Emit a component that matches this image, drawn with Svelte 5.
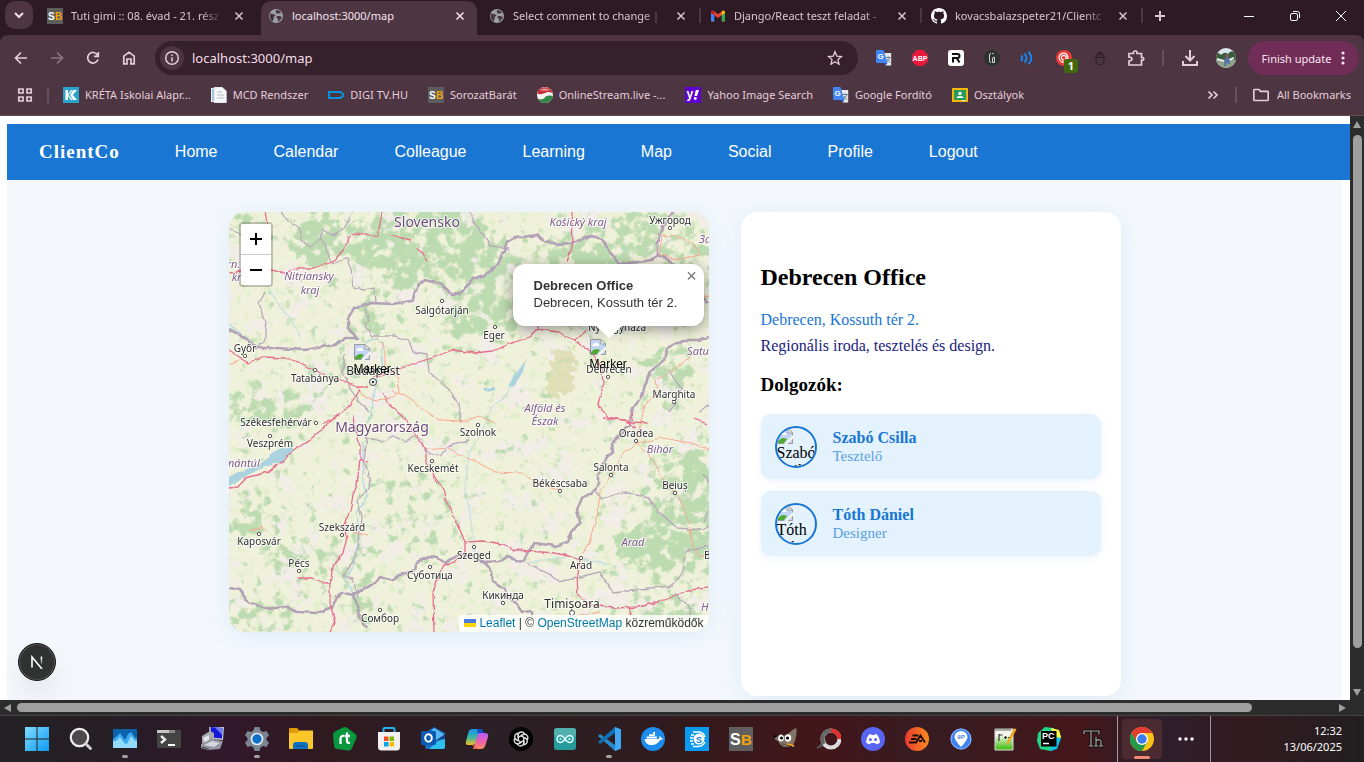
<script>
  const globe = '<circle cx="8" cy="8" r="7" fill="#9aa0a6"/><path d="M2.3 5.5C4 5 5 6.6 6.6 6.4 8 6.2 7.3 8 6 8.6 5 9 6.6 10.600 5.400 11.400 4.600 12 5 13.600 4.400 13.600 2 12 1.200 8.500 2.300 5.500ZM8.200 2.200C9.600 1.600 12.800 3.600 13 5 11.600 6 10.400 4.600 9.600 5.800 8.600 6 7.200 3.600 8.200 2.200ZM9 8.300C11 7.300 12.400 9 13.800 8.600 13.600 10.600 11.800 13.400 9.800 13.600 9.600 12 11 11.200 9.400 10.600 8.400 10.200 8 9 9 8.300Z" fill="#4a3340"/>';
  const sb = '<rect width="16" height="16" fill="#5d5d5d"/><text x="1" y="12" font-family="Liberation Sans" font-weight="bold" font-size="10" fill="#fff">S</text><text x="8" y="12" font-family="Liberation Sans" font-weight="bold" font-size="10" fill="#f5a30a">B</text>';
  const gmail = '<path d="M1 3.500V13.500H4V7L8 10L12 7V13.500H15V3.500L13 2.500L8 6.300L3 2.500Z" fill="#ea4335"/><path d="M1 4V12.500Q1 13.500 2 13.500H4.300V6.300Z" fill="#4285f4"/><path d="M15 4V12.500Q15 13.500 14 13.500H11.700V6.300Z" fill="#34a853"/><path d="M11.700 3.400L13 2.500Q15 2.500 15 4V5L11.700 7.200Z" fill="#fbbc04"/><path d="M1 5V4Q1 2.500 3 2.500L4.300 3.500V7.300Z" fill="#c5221f"/>';
  const github = '<path fill="#fff" d="M8 0C3.580 0 0 3.580 0 8c0 3.540 2.290 6.530 5.470 7.590.4.070.55-.17.55-.38 0-.19-.01-.82-.01-1.490-2.010.37-2.530-.49-2.690-.94-.09-.23-.48-.94-.82-1.130-.28-.15-.68-.52-.01-.53.63-.01 1.080.58 1.230.82.72 1.210 1.870.87 2.330.66.07-.52.28-.87.51-1.070-1.780-.2-3.640-.89-3.640-3.950 0-.87.31-1.590.82-2.150-.08-.2-.36-1.020.08-2.120 0 0 .67-.21 2.200.82.64-.18 1.320-.27 2-.27s1.360.09 2 .27c1.530-1.040 2.200-.82 2.200-.82.44 1.100.16 1.920.08 2.120.51.56.82 1.270.82 2.150 0 3.070-1.870 3.750-3.650 3.950.29.25.54.73.54 1.480 0 1.070-.01 1.930-.01 2.200 0 .21.15.46.55.38A8.010 8.010 0 0 0 16 8c0-4.420-3.580-8-8-8z"/>';
  const translate = '<path d="M6 3H15.200V15.500H9.500Z" fill="#e8e8e8"/><path d="M1 0H7.500L11.500 13H1Q0 13 0 12V1Q0 0 1 0Z" fill="#4285f4"/><path d="M8 13H11.500L9.500 15.500Z" fill="#2a56c6"/><text x="1.600" y="9.200" font-family="Liberation Sans" font-weight="bold" font-size="8" fill="#fff">G</text><path d="M10 7.500H14.500M12.200 6.500V7.500M13.800 7.500C13.500 9.500 11.500 11.500 10.800 12M11 9C12 11 13.500 12 14.300 12.500" stroke="#607d8b" fill="none"/>';

  const tabs = [
    { title: 'Tuti gimi :: 08. évad - 21. rész', icon: sb },
    { title: 'localhost:3000/map', icon: globe, active: true },
    { title: 'Select comment to change |', icon: globe },
    { title: 'Django/React teszt feladat -', icon: gmail },
    { title: 'kovacsbalazspeter21/Clientc', icon: github },
  ];

  const bookmarks = [
    { title: 'KRÉTA Iskolai Alapr...', icon: '<rect width="16" height="16" fill="#29a3cc"/><path d="M2.500 3V13H5V3ZM10 3L5.500 8L10 13H8L5 9V7L8 3Z" fill="#fff"/><path d="M10.500 3H14L9.800 8L14 13H10.500L7 8Z" fill="#fff"/>' },
    { title: 'MCD Rendszer', icon: '<path d="M0 1H8L10 3V15H0Z" fill="#e6f2fa"/><path d="M1 2H4V14H1Z" fill="#9ec5e6"/><path d="M3 0H11L15.500 4V16H3Z" fill="#f6f6f8" stroke="#c4c8d0" stroke-width=".6"/><path d="M6 5H11M6 8H13M6 11H13" stroke="#b3bccb"/>' },
    { title: 'DIGI TV.HU', icon: '<path d="M0 4H6V6H2V10H6V12H0ZM7 4H13L16 6.500V9.500L13 12H7V10H12L14 8.500V7.500L12 6H7ZM4 10H9V12H4ZM4 4H8V6H4Z" fill="#0a90d8"/>' },
    { title: 'SorozatBarát', icon: sb },
    { title: 'OnlineStream.live -...', icon: '<circle cx="8" cy="8" r="8" fill="#f2f2f0"/><path d="M.2 6.500A8 8 0 0 1 15.800 6.500Q12 4 8 6T.2 6.500Z" fill="#c62f38"/><path d="M3 3Q8 0 13 3Q9 4 3 3Z" fill="#e9a4a6"/><path d="M1.200 12.200Q7 13 8.500 9.500Q12 8 15.900 9A8 8 0 0 1 1.200 12.200Z" fill="#34874b"/>' },
    { title: 'Yahoo Image Search', icon: '<rect width="16" height="16" fill="#5f01d1"/><text x="1.500" y="11" font-family="Liberation Sans" font-weight="bold" font-size="12" fill="#fff">y</text><path d="M10.800 3H14L12 9H9.500Z" fill="#fff"/><circle cx="10.300" cy="11.500" r="1.400" fill="#fff"/>' },
    { title: 'Google Fordító', icon: translate },
    { title: 'Osztályok', icon: '<rect y="1" width="16" height="14" fill="#f4b70a"/><rect x="2" y="3" width="12" height="10" fill="#27995a"/><circle cx="8" cy="6.500" r="1.700" fill="#fff"/><path d="M4.500 11Q4.500 9 8 9T11.500 11Z" fill="#fff"/><path d="M10 13H13V14H10Z" fill="#eee"/>' },
  ];

  const extensions = [
    { name: 'Translate', icon: translate },
    { name: 'Adblock', icon: '<path d="M4.700 0H11.300L16 4.700V11.300L11.300 16H4.700L0 11.300V4.700Z" fill="#e8193c"/><text x="8" y="10.500" text-anchor="middle" font-family="Liberation Sans" font-weight="bold" font-size="7" fill="#fff">ABP</text>' },
    { name: 'Reader', icon: '<rect width="16" height="16" rx="3" fill="#fff"/><path d="M5 12.500V8H9.500Q11.500 8 11.500 6Q11.500 4 9.500 4H4M9 8.500L11.500 12.500" fill="none" stroke="#111" stroke-width="2"/>' },
    { name: 'Braces', icon: '<circle cx="8" cy="8" r="8" fill="#303231"/><path d="M7 3.500Q5.500 3.500 5.500 5V10.500Q5.500 12.500 7 12.500M9.500 3.500H8M10 7Q8.500 7 8.500 9V12.500H10.500V7" fill="none" stroke="#d5d5d5"/>' },
    { name: 'Sound', icon: '<path d="M1.500 6Q3 8 1.500 10.500M5 4Q8 8 5 12M9 2.500Q13.500 8 9 13.500" fill="none" stroke="#1687f0" stroke-width="2" stroke-linecap="round"/>' },
    { name: 'Mail checker', badge: '1', icon: '<circle cx="8" cy="8" r="8" fill="#ec3a34"/><path d="M10 8A2.300 2.300 0 1 0 8 10M10 5.500V8.500Q12 10 12 7A4.500 4.500 0 1 0 9 12" fill="none" stroke="#fff" stroke-width="1.200"/>' },
    { name: 'Mouse gestures', icon: '<path d="M4 7Q4 3.500 8 3.500T12 7V10Q12 14.500 8 14.500T4 10ZM3.500 7.500H12.500M8 1V8M6 4V2.500M10 4V2.500" fill="none" stroke="#2c1d25"/>' },
  ];

  const navLinks = ['Home', 'Calendar', 'Colleague', 'Learning', 'Map', 'Social', 'Profile', 'Logout'];

  const employees = [
    { name: 'Szabó Csilla', role: 'Tesztelő' },
    { name: 'Tóth Dániel', role: 'Designer' },
  ];

  const cities = [
    [16, 140, 'Győr', 16, 144], [86, 170, 'Tatabánya', 86, 158], [213, 102, 'Salgótarján', 213, 89],
    [265, 127, 'Eger', 266, 115], [388, 119, 'Nyíregyháza', 388, 108], [380, 161, 'Debrecen', 379, 165],
    [441, 12, 'Ужгород', 441, 16], [445, 186, 'Marghita', 445, 190], [47, 214, 'Székesfehérvár', 87, 211],
    [41, 235, 'Veszprém', 41, 224], [204, 260, 'Kecskemét', 203, 249], [113, 319, 'Szekszárd', 113, 323],
    [30, 333, 'Kaposvár', 30, 322], [70, 355, 'Pécs', 70, 359], [201, 367, 'Суботица', 201, 355],
    [151, 410, 'Сомбор', 151, 398], [249, 224, 'Szolnok', 249, 213], [245, 347, 'Szeged', 245, 335],
    [407, 225, 'Oradea', 407, 229], [382, 259, 'Salonta', 382, 263], [331, 275, 'Békéscsaba', 331, 279],
    [446, 277, 'Beiuș', 446, 281], [352, 357, 'Arad', 352, 346], [274, 387, 'Кикинда', 274, 391],
    [486, 347, 'Brad', 494, 352],
  ];

  const regions = [
    [2, 56, 'Trn.'], [12, 69, 'kraj'], [80, 68, 'Nitriansky'], [81, 82, 'kraj'], [349, 14, 'Košický kraj'],
    [316, 200, 'Alföld és'], [316, 213, 'Észak'], [431, 241, 'Bihor'], [404, 334, 'Arad'], [469, 143, 'Satu'],
    [8, 255, 'Dunántúl'], [479, 31, 'Зак'], [479, 399, 'Hu'],
  ];

  const tasks = [
    { name: 'Start', art: '<defs><linearGradient id="win" x2="1" y2="1"><stop stop-color="#7fdcfd"/><stop offset="1" stop-color="#0c9af5"/></linearGradient></defs><path d="M0 0H11.500V11.500H0ZM12.500 0H24V11.500H12.500ZM0 12.500H11.500V24H0ZM12.500 12.500H24V24H12.500Z" fill="url(#win)"/>' },
    { name: 'Search', art: '<circle cx="10.500" cy="10.500" r="8.700" fill="#4c484b" stroke="#eee" stroke-width="2.200"/><path d="M17 17L21.500 21.500" stroke="#d0d0d0" stroke-width="3" stroke-linecap="round"/>' },
    { name: 'Monitor', run: true, art: '<rect y="2" width="24" height="19" rx="1" fill="#0b62ab"/><path d="M0 12L3 10L7 6L10 10L12 13L15 7L18 5L22 11L24 11V21H0Z" fill="#3aa7ee"/><path d="M0 14H3L7 10L11 16L14 17L18 9L22 14H24V21H0Z" fill="#93dbff"/>' },
    { name: 'Terminal', art: '<rect y="3" width="24" height="18" rx="1" fill="#444"/><path d="M0 3H12V6H0Z" fill="#c4c4c4"/><path d="M12 3H18V6H12Z" fill="#8a8a8a"/><path d="M4 9L8 12.500L4 16" stroke="#eee" stroke-width="2.400" fill="none"/><path d="M11 18H18" stroke="#fff" stroke-width="2"/>' },
    { name: 'Putty', art: '<path d="M8 -1L23 0L22 13L9 12Z" fill="#c9ccd4"/><path d="M9.500 0L21.500 1L21 11.500L10.500 10.500Z" fill="#1518d4"/><path d="M14 .5L21.500 1L21.200 8Z" fill="#6c7bf0"/><path d="M1 9L9 4L13 6V14L5 18L1 16Z" fill="#a7aab1"/><path d="M2 11L8 8V14L4 16Z" fill="#e2e4e9"/><path d="M0 17L10 12L22 14L19 22L7 23L0 21Z" fill="#94979f"/><path d="M3 18L11 14L19 16L13 20Z" fill="#d6d8de"/><path d="M1 20L8 22" stroke="#444"/>' },
    { name: 'Settings', run: true, art: '<path d="M9.500 0H14.500L15.500 3.500L18 5L21.500 4L24 8.300L21.500 11V13L24 15.700L21.500 20L18 19L15.500 20.500L14.500 24H9.500L8.500 20.500L6 19L2.500 20L0 15.700L2.500 13V11L0 8.300L2.500 4L6 5L8.500 3.500Z" fill="#7b8591"/><circle cx="12" cy="12" r="6.300" fill="#e7edf3"/><circle cx="12" cy="12" r="4.700" fill="#1070c8"/>' },
    { name: 'Files', art: '<path d="M0 2Q0 1 1 1H8L11 4H23V8H0Z" fill="#e09a07"/><path d="M0 6H8L11 3.500H24V21Q24 22 23 22H1Q0 22 0 21Z" fill="#fdc62b"/><path d="M4 22V18Q4 15 7 15H16Q19 15 19 18V22Z" fill="#0d72c4"/><path d="M7 19H16" stroke="#0b4c86"/>' },
    { name: 'RT', art: '<path d="M10 .500Q12 -.500 14 .800L22.500 7Q24 8.500 23.500 11L19 21Q18 24 15 23.500L4 22Q1 21.500 1 18.500L0 8Q0 5 3 4Z" fill="#08973c"/><path d="M7.500 17V12Q7.500 8.500 11 9M14 5.500V14Q14 16.500 17 15.500M11.500 9H17" fill="none" stroke="#fff" stroke-width="2.300"/>' },
    { name: 'Store', art: '<path d="M6.500 6V2Q6.500 1 7.500 1H16.500Q17.500 1 17.500 2V6" stroke="#29b0ec" stroke-width="2" fill="none"/><path d="M1 5H23V20Q23 23.500 19.500 23.500H4.500Q1 23.500 1 20Z" fill="#f0f0f0"/><path d="M7 9.500H11.500V14H7Z" fill="#f25022"/><path d="M12.500 9.500H17V14H12.500Z" fill="#7fba00"/><path d="M7 15H11.500V19.500H7Z" fill="#00a4ef"/><path d="M12.500 15H17V19.500H12.500Z" fill="#ffb900"/>' },
    { name: 'Outlook', art: '<path d="M4 6L13 0L24 6V20Q24 22 22 22H6Q4 22 4 20Z" fill="#1a6fc4"/><path d="M13 1L24 8L14 15L6 9Z" fill="#5ab9f2"/><path d="M24 8V20Q24 22 22 22H8Z" fill="#2fc1ee"/><path d="M14 14L24 7V12Z" fill="#12468f"/><rect y="4" width="15" height="14" rx="1.500" fill="#0c59b6"/><ellipse cx="7.500" cy="11" rx="3.300" ry="3.700" fill="none" stroke="#fff" stroke-width="2"/>' },
    { name: 'Copilot', art: '<defs><linearGradient id="cpl" x2="0" y2="1"><stop stop-color="#1e8ef0"/><stop offset=".5" stop-color="#35b6a5"/><stop offset="1" stop-color="#f2c320"/></linearGradient><linearGradient id="cpr" x2="0" y2="1"><stop stop-color="#b25cf5"/><stop offset=".5" stop-color="#ea5fb4"/><stop offset="1" stop-color="#fb8a5e"/></linearGradient></defs><path d="M7 2H15L11 15Q10 18.500 6 18H3Q0 18 1 14L3.500 5Q4.500 2 7 2Z" fill="url(#cpl)"/><path d="M12 2H15Q18 2 18.500 5L17 7L13 8Z" fill="#1450c5"/><path d="M14 6H20Q24 6 23 10L20.500 18Q19.500 22 16 22H8L12.500 9Q13 6 14 6Z" fill="url(#cpr)"/><path d="M6 18Q9 18 10 22H13Q10 21 9 18Z" fill="#e0523e"/>' },
    { name: 'ChatGPT', art: '<circle cx="12" cy="12" r="12" fill="#000"/><g fill="none" stroke="#ddd" stroke-width="1.300"><path id="petal" d="M9.300 13.500V8.700Q9.300 5 12.500 5Q14.500 5 15.500 6.500L11.500 8.800"/><use href="#petal" transform="rotate(60 12 12)"/><use href="#petal" transform="rotate(120 12 12)"/><use href="#petal" transform="rotate(180 12 12)"/><use href="#petal" transform="rotate(240 12 12)"/><use href="#petal" transform="rotate(300 12 12)"/></g>' },
    { name: 'Arduino', art: '<rect x="1" y="1" width="22" height="22" rx="3" fill="#269b9c"/><rect x="1" y="1" width="22" height="9" rx="3" fill="#4fb0ae"/><path d="M12 12Q9.500 8.500 7.500 8.500A3.500 3.500 0 0 0 7.500 15.500Q9.500 15.500 12 12Q14.500 8.500 16.500 8.500A3.500 3.500 0 0 1 16.500 15.500Q14.500 15.500 12 12ZM6.500 12H8.500M15.500 12H17.500M16.500 11V13" fill="none" stroke="#dff" stroke-width="1.500"/>' },
    { name: 'VS Code', run: true, art: '<path d="M18 0L24 2.500V21.500L18 24L1 9L3 7L18 18Z" fill="#2489ca"/><path d="M18 0L1 15L3 17L18 6Z" fill="#1070b3"/><path d="M18 0L24 2.500V21.500L18 24Z" fill="#3fa9f5"/>' },
    { name: 'Docker', art: '<circle cx="12" cy="12" r="12" fill="#1d8ceb"/><path d="M3.500 12H18Q18 9.500 19 9Q20 10 20 11Q22 11 22 11.500Q21 13 19 13Q16.500 18 10.500 18Q4.500 18 3.500 12Z" fill="#fff"/><path d="M5.500 9.500H16V11.500H5.500ZM8 7.300H14V9H8ZM12 5H14V7H12Z" fill="#fff"/>' },
    { name: 'Backup', art: '<rect width="24" height="24" fill="#0c9af0"/><circle cx="14" cy="12" r="5.500" fill="#fff"/><path d="M6 8H9M5 11H8M5 14H8M6 17H9M8 5H13Q18.500 5 20 10M8 19.500H13Q18 19.500 20 15" stroke="#fff" stroke-width="1.400" fill="none"/><text x="11" y="15.500" font-family="Liberation Sans" font-weight="bold" font-size="9" fill="#0c7dd0">S</text>' },
    { name: 'SorozatBarát', art: '<rect width="24" height="24" fill="#5f5f5f"/><text x="1" y="17.500" font-family="Liberation Sans" font-weight="bold" font-size="16" fill="#fff">S</text><text x="12" y="17.500" font-family="Liberation Sans" font-weight="bold" font-size="15" fill="#f5a30a">B</text>' },
    { name: 'GIMP', art: '<path d="M1 9Q3 8 5 10Q14 9 17 5Q20 2 23.500 1Q24 8 22 14Q20 20 13 20Q8 20 5 14Q1 13 1 9Z" fill="#807568"/><ellipse cx="8" cy="11" rx="2.800" ry="3.500" fill="#fff"/><ellipse cx="15" cy="11" rx="3.200" ry="3.700" fill="#fff"/><circle cx="8.500" cy="11" r="1.500"/><circle cx="14.500" cy="11" r="1.600"/><ellipse cx="2" cy="9.500" rx="1.600" ry="1.200"/><path d="M8 16Q12 20 17 16L20 19L24 21V22.500L19 20.500" fill="#222"/><path d="M14 17L19 18L21 19.500" stroke="#ef9a2a" stroke-width="2"/>' },
    { name: 'Ring', art: '<path d="M0 20Q5 17 7 11L10 15Q6 20 0 22Z" fill="#555"/><circle cx="14" cy="12" r="8.500" fill="none" stroke="#ddd" stroke-width="4"/><path d="M14 3.500A8.500 8.500 0 0 1 22.500 12" stroke="#e02f2b" stroke-width="4" fill="none"/><path d="M14 3.500A8.500 8.500 0 0 0 7 17" stroke="#666" stroke-width="4" fill="none"/>' },
    { name: 'Discord', art: '<circle cx="12" cy="12" r="12" fill="#5765f2"/><path d="M8 7.500L10 7L10.500 8H13.500L14 7L16 7.500Q19 11 19 15.500Q17.500 17 15 17.300L14.200 16H9.800L9 17.300Q6.500 17 5 15.500Q5 11 8 7.500Z" fill="#fff"/><ellipse cx="9.400" cy="12.600" rx="1.500" ry="1.700" fill="#5765f2"/><ellipse cx="14.600" cy="12.600" rx="1.500" ry="1.700" fill="#5765f2"/>' },
    { name: 'EA', art: '<defs><linearGradient id="ea" x2="1"><stop stop-color="#e83b2f"/><stop offset="1" stop-color="#fb8a1f"/></linearGradient></defs><circle cx="12" cy="12" r="12" fill="url(#ea)"/><path d="M7.500 8.500H13.500M6 12H11.500M4 15.500H11L15.500 8.500L20 15.500M14 14H17" fill="none" stroke="#1a0a0a" stroke-width="1.900"/>' },
    { name: 'Maps', art: '<circle cx="12" cy="12" r="10.500" fill="#3d82f0"/><circle cx="12" cy="12" r="10" fill="none" stroke="#8fb8f8"/><path d="M12 20Q5.500 13 5.500 10A6.500 6 0 0 1 18.500 10Q18.500 13 12 20Z" fill="#fff"/><text x="12" y="12" text-anchor="middle" font-family="Liberation Sans" font-weight="bold" font-size="6" fill="#4b87e8">9P</text>' },
    { name: 'Notepad++', art: '<defs><linearGradient id="npp" x2="0" y2="1"><stop offset=".3" stop-color="#f4f8ec"/><stop offset=".9" stop-color="#4cbf1f"/></linearGradient></defs><path d="M2 2H20V23H2Z" fill="url(#npp)" stroke="#ddd"/><path d="M3 1V4M5 1V4M7 1V4M9 1V4M11 1V4M13 1V4M15 1V4M17 1V4" stroke="#666"/><path d="M6 7V14M6 8H9.500M11 10.500H14M12.500 9V12M15 10.500H18" stroke="#333" stroke-width="1.200"/><path d="M14 15L21 1L23.500 2.500L16 16L13.500 18Z" fill="#f0a81f"/>' },
    { name: 'PyCharm', art: '<path d="M1 6L8 0L16 1L22 5L24 10L20 20L14 24L3 22L0 14Z" fill="#21d789"/><path d="M14 1L22 3L24 10L19 17Z" fill="#fcf84a"/><path d="M18 10L24 11L20 22L13 24Z" fill="#07c3f2"/><rect x="4" y="4" width="15.500" height="15.500" fill="#000"/><text x="5" y="12" font-family="Liberation Sans" font-weight="bold" font-size="9" fill="#fff">PC</text><path d="M6 16.500H12" stroke="#fff" stroke-width="1.500"/>' },
    { name: 'Thonny', art: '<path d="M3 4H18V7M10 4V19M8 19H12M15 10V19M15 14Q20 11 20 15V19M18 19H22M13 19H17M3 4V7" fill="none" stroke="#0a0a0a" stroke-width="3"/><path d="M3 4H18V7M10 4V19M8 19H12M15 10V19M15 14Q20 11 20 15V19M18 19H22M13 19H17M3 4V7" fill="none" stroke="#a9a9a9" stroke-width="1.200"/>' },
  ];

  let address = $state('localhost:3000/map');
</script>

{#snippet brokenImage()}
  <svg class="broken" viewBox="0 0 16 16" width="16" height="16" aria-hidden="true">
    <path d="M.5 .5H11L15.500 5V15.500H.5Z" fill="#c3d5f5" stroke="#9a9a9a" />
    <path d="M11 .5V5H15.500Z" fill="#fff" stroke="#9a9a9a" />
    <path d="M2.500 7Q2 4.500 4.500 4.500Q6 2.500 8 4.500Q9.500 4.500 9 7Z" fill="#fff" />
    <path d="M1 15V13Q5 8 10 11L7 15Z" fill="#4fa832" />
    <path d="M7 16L16 7V10.500L10.500 16Z" fill="#f3f6ee" />
  </svg>
{/snippet}

<div class="desktop">
  <header class="tabstrip">
    <button class="search-tabs" aria-label="Search tabs">
      <svg viewBox="0 0 12 12" width="12" height="12"><path d="M2 4L6 8L10 4" /></svg>
    </button>
    <div class="tabs">
      {#each tabs as tab}
        <div class="tab" class:active={tab.active}>
          <svg viewBox="0 0 16 16" width="16" height="16" aria-hidden="true">{@html tab.icon}</svg>
          <button class="title">{tab.title}</button>
          <button class="close" aria-label="Close tab">
            <svg viewBox="0 0 16 16" width="16" height="16"><path d="M4.500 4.500L11.500 11.500M11.500 4.500L4.500 11.500" /></svg>
          </button>
        </div>
      {/each}
      <button class="new-tab" aria-label="New tab"><svg viewBox="0 0 16 16" width="16" height="16"><path d="M8 3V13M3 8H13" /></svg></button>
    </div>
    <div class="window-buttons">
      <button aria-label="Minimize"><svg viewBox="0 0 12 12" width="12" height="12"><path d="M1 6.500H11" /></svg></button>
      <button aria-label="Restore"><svg viewBox="0 0 12 12" width="12" height="12"><rect x="1.500" y="3.500" width="7" height="7" rx="1.500" /><path d="M4 1.500H8.500Q10.500 1.500 10.500 3.500V8" /></svg></button>
      <button aria-label="Close window"><svg viewBox="0 0 12 12" width="12" height="12"><path d="M1 1L11 11M11 1L1 11" /></svg></button>
    </div>
  </header>

  <div class="toolbar">
    <button class="tool" aria-label="Back"><svg viewBox="0 0 16 16" width="16" height="16"><path d="M14 8H3M8 2.500L2.500 8L8 13.500" /></svg></button>
    <button class="tool dim" aria-label="Forward"><svg viewBox="0 0 16 16" width="16" height="16"><path d="M2 8H13M8 2.500L13.500 8L8 13.500" /></svg></button>
    <button class="tool" aria-label="Reload"><svg viewBox="0 0 16 16" width="16" height="16"><path d="M13 9.500A5.300 5.300 0 1 1 12.500 5L13 6M13.300 2V6.300H9" /></svg></button>
    <button class="tool" aria-label="Home"><svg viewBox="0 0 16 16" width="16" height="16"><path d="M2.800 6.200L8 2.200L13.200 6.200V13.800H10V9H6V13.800H2.800Z" /></svg></button>
    <div class="omnibox">
      <button class="site-info" aria-label="Site information">
        <svg viewBox="0 0 16 16" width="16" height="16"><circle cx="8" cy="8" r="6.300" /><path d="M8 7.200V11.500M8 4.500V6" /></svg>
      </button>
      <input aria-label="Address" bind:value={address} />
      <button class="star" aria-label="Bookmark this page">
        <svg viewBox="0 0 16 16" width="16" height="16"><path d="M8 1.800L9.800 6.100L14.500 6.500L11 9.600L12 14.200L8 11.700L4 14.200L5 9.600L1.500 6.500L6.200 6.100Z" /></svg>
      </button>
    </div>
    <div class="extensions">
      {#each extensions as ext}
        <button class="tool art" aria-label={ext.name}>
          <svg viewBox="0 0 16 16" width="16" height="16">{@html ext.icon}</svg>
          {#if ext.badge}<span class="badge">{ext.badge}</span>{/if}
        </button>
      {/each}
      <button class="tool" aria-label="Extensions"><svg viewBox="0 0 18 18" width="18" height="18"><path d="M2 4.500H6.500V3Q8.500 0.500 10 3V4.500H14.500V8.500H16Q17.500 10 16 11.200H14.500V16H2V12Q5 11.500 5 10T2 8.200Z" /></svg></button>
    </div>
    <span class="divider"></span>
    <button class="tool" aria-label="Downloads"><svg viewBox="0 0 18 18" width="18" height="18"><path d="M9 1V11M4.500 7L9 11.500L13.500 7M2 12V16H16V12" stroke-width="2" /></svg></button>
    <button class="tool art" aria-label="Profile">
      <svg viewBox="0 0 20 20" width="20" height="20">
        <clipPath id="face"><circle cx="10" cy="10" r="10" /></clipPath>
        <g clip-path="url(#face)"><rect width="20" height="20" fill="#dce8f0" /><path d="M0 7Q2 3 5 7Q9 3 12 6Q15 1 20 5V12H0Z" fill="#3c5a3c" /><path d="M0 12H20V20H0Z" fill="#8fa189" /><path d="M1 11L8 13M13 12L18 10" stroke="#e4e9e4" stroke-width="2" /><circle cx="11" cy="8" r="1.800" fill="#8a6656" /><path d="M9 9.500H13L14 16H12L11 14L10 18H8Z" fill="#5571a8" /></g>
      </svg>
    </button>
    <button class="update">Finish update <svg viewBox="0 0 4 16" width="4" height="16"><circle cx="2" cy="3" r="1.600" /><circle cx="2" cy="8" r="1.600" /><circle cx="2" cy="13" r="1.600" /></svg></button>
  </div>

  <nav class="bookmarks" aria-label="Bookmarks">
    <button class="apps" aria-label="Apps"><svg viewBox="0 0 16 16" width="16" height="16"><path d="M1.800 2H6V6H1.800ZM10 2H14.200V6H10ZM1.800 10H6V14H1.800ZM10 10H14.200V14H10Z" /></svg></button>
    <span class="divider"></span>
    <div class="marks">
      {#each bookmarks as mark}
        <a href="#bookmark"><svg viewBox="0 0 16 16" width="16" height="16" aria-hidden="true">{@html mark.icon}</svg>{mark.title}</a>
      {/each}
    </div>
    <button class="apps" aria-label="More bookmarks"><svg viewBox="0 0 16 16" width="16" height="16"><path d="M3.500 4.500L7 8L3.500 11.500M8.500 4.500L12 8L8.500 11.500" /></svg></button>
    <span class="divider"></span>
    <a href="#all"><svg class="folder" viewBox="0 0 16 16" width="16" height="16" aria-hidden="true"><path d="M.8 3Q.8 2.500 1.500 2.500H6L7.500 4.300H14.500Q15.200 4.300 15.200 5V12.800Q15.200 13.500 14.500 13.500H1.500Q.8 13.500 .8 12.800Z" /></svg>All Bookmarks</a>
  </nav>

  <div class="viewport">
    <div class="page">
      <nav class="site-nav" aria-label="Main">
        <strong>ClientCo</strong>
        <div class="links">
          {#each navLinks as link}<a href="#{link.toLowerCase()}">{link}</a>{/each}
        </div>
      </nav>
      <main>
        <section class="map" aria-label="Map">
          <svg class="tiles" viewBox="0 0 480 420" preserveAspectRatio="xMidYMid slice">
            <defs>
              <filter id="forest" x="0" y="0" width="480" height="420" filterUnits="userSpaceOnUse" color-interpolation-filters="sRGB">
                <feTurbulence type="fractalNoise" baseFrequency=".09" numOctaves="5" seed="8" />
                <feColorMatrix values="0 0 0 0 0 0 0 0 0 0 0 0 0 0 0 1 0 0 0 0" result="n" />
                <feComposite in="n" in2="SourceGraphic" operator="arithmetic" k2=".9" k3=".3" />
                <feColorMatrix values="0 0 0 0 .74 0 0 0 0 .86 0 0 0 0 .69 0 0 0 7 -4.100" />
              </filter>
              <filter id="meadow" x="0" y="0" width="480" height="420" filterUnits="userSpaceOnUse" color-interpolation-filters="sRGB">
                <feTurbulence type="fractalNoise" baseFrequency=".12" numOctaves="4" seed="31" />
                <feColorMatrix values="0 0 0 0 .85 0 0 0 0 .93 0 0 0 0 .76 7 0 0 0 -4.100" />
              </filter>
              <filter id="towns" x="0" y="0" width="480" height="420" filterUnits="userSpaceOnUse" color-interpolation-filters="sRGB">
                <feTurbulence type="fractalNoise" baseFrequency=".04" numOctaves="5" seed="52" />
                <feColorMatrix values="0 0 0 0 .95 0 0 0 0 .93 0 0 0 0 .91 8 0 0 0 -4.500" />
              </filter>
              <filter id="soft" x="-20%" y="-20%" width="140%" height="140%"><feGaussianBlur stdDeviation="8" /></filter>
              <filter id="rough" x="-5%" y="-5%" width="110%" height="110%">
                <feTurbulence type="fractalNoise" baseFrequency=".12" numOctaves="2" seed="4" />
                <feDisplacementMap in="SourceGraphic" scale="4" xChannelSelector="R" yChannelSelector="G" />
              </filter>
              <filter id="speckle" x="-10%" y="-10%" width="120%" height="120%">
                <feTurbulence type="fractalNoise" baseFrequency=".15" numOctaves="3" seed="9" />
                <feDisplacementMap in="SourceGraphic" scale="22" xChannelSelector="R" yChannelSelector="G" />
              </filter>
            </defs>
            <rect width="480" height="420" fill="#f0f1db" />
            <rect width="480" height="420" filter="url(#towns)" />
            <rect width="480" height="420" filter="url(#meadow)" opacity=".6" />
            <path d="M324 137L345 136L347 152L342 180L322 187L314 168L322 160Z" fill="#dcdcae" filter="url(#speckle)" opacity=".8" />
            <g filter="url(#forest)">
              <g filter="url(#soft)">
                <ellipse cx="20" cy="18" rx="25" ry="14" opacity=".7" />
                <ellipse cx="88" cy="25" rx="28" ry="30" />
                <ellipse cx="190" cy="30" rx="75" ry="42" opacity=".9" />
                <ellipse cx="165" cy="70" rx="25" ry="20" opacity=".6" />
                <ellipse cx="250" cy="48" rx="40" ry="30" opacity=".9" />
                <ellipse cx="265" cy="100" rx="45" ry="22" />
                <ellipse cx="232" cy="118" rx="22" ry="12" />
                <ellipse cx="140" cy="108" rx="15" ry="18" />
                <ellipse cx="350" cy="45" rx="45" ry="22" />
                <ellipse cx="410" cy="25" rx="30" ry="30" opacity=".8" />
                <ellipse cx="462" cy="50" rx="20" ry="40" opacity=".7" />
                <ellipse cx="40" cy="200" rx="45" ry="20" opacity=".8" />
                <ellipse cx="112" cy="160" rx="14" ry="22" opacity=".8" />
                <ellipse cx="20" cy="305" rx="28" ry="30" opacity=".6" />
                <ellipse cx="75" cy="345" rx="45" ry="13" opacity=".8" />
                <ellipse cx="30" cy="400" rx="50" ry="14" opacity=".7" />
                <ellipse cx="133" cy="370" rx="9" ry="60" opacity=".8" />
                <ellipse cx="190" cy="295" rx="40" ry="40" opacity=".4" />
                <ellipse cx="440" cy="160" rx="24" ry="24" opacity=".8" />
                <ellipse cx="450" cy="270" rx="40" ry="35" opacity=".6" />
                <ellipse cx="440" cy="335" rx="60" ry="30" />
                <ellipse cx="465" cy="290" rx="22" ry="60" />
                <ellipse cx="440" cy="400" rx="40" ry="16" opacity=".8" />
              </g>
            </g>
            <g fill="#aad3df" filter="url(#rough)">
              <path d="M0 265L16 258L34 250L43 241L53 236L64 234V241L53 250L36 255L13 266L0 275Z" />
              <path d="M279 173L288 160L297 148L294 160L284 175ZM254 176L266 175V178L256 179Z" />
            </g>
            <g fill="none" stroke="#b4d8e2" stroke-width="1.300" filter="url(#rough)">
              <path d="M0 112L12 122L28 137M136 130L146 127L153 131L152 155L146 175L144 194L138 212" />
              <path d="M134 230V270L138 285L128 300L130 325L124 355L116 368L126 385" />
              <path d="M284 172L274 186L262 196L254 220L240 240L236 280L241 300L246 340" opacity=".6" />
              <path d="M40 80L60 105L72 125" opacity=".6" />
              <path d="M300 350L340 345L380 352" opacity=".6" />
            </g>
            <g fill="none" stroke="#b9a9bb" stroke-width="1.300" stroke-linejoin="round" filter="url(#rough)">
              <path d="M52 0L60 10L70 15L72 28L80 35L90 30L94 18L105 24L116 15L124 0M93 26L98 40L104 52L118 46L122 58L124 76L136 78L145 76L146 92" />
              <path d="M0 18L18 24L38 16M36 80L30 92L36 110L38 126L26 137M136 96L140 110L136 112L142 124L166 124L180 129L184 140L198 142L200 160L214 172L230 190L232 210" />
              <path d="M116 142L114 160L122 178L130 190L140 200M136 224L138 228L135 248L141 266L140 276L129 288L133 306L129 336L124 350L114 364L124 366L130 385" />
              <path d="M136 226L152 230L164 224L176 230L184 224L194 228L196 240L210 244L224 232L240 228" />
              <path d="M240 0L252 20L262 34L280 36M440 158L446 168L452 176L446 192L440 200M470 200L480 192" />
              <path d="M367 280L372 287L395 280L420 286L430 300L448 316L474 318L480 314M296 350L320 362L330 370L348 366L370 360L384 380L420 376L444 374L454 360L456 340L480 334" />
              <path d="M446 382L454 388L462 398L458 410M474 262L480 270M480 300L474 312" />
            </g>
            <g fill="none" stroke="#b3a2b5" stroke-width="2.600" stroke-linejoin="round" filter="url(#rough)">
              <path d="M0 117L16 126L28 136L48 136L76 138L93 135L106 133L116 126L128 126L119 116V106L125 96L143 91L163 92L183 89L188 75L196 68L213 73L224 83L234 80L244 67L256 63L269 53L278 30L286 26L308 23L316 29L333 33L351 28L363 23L373 29L379 35L385 47L389 52L409 50L423 48L428 43L436 46L444 52L460 58L478 92" />
              <path d="M428 43V30L433 16L444 0" />
              <path d="M480 125L469 128L453 128L439 136L433 150L421 160L416 173L413 185L404 196L400 213L391 223L383 231L384 240L378 246L369 263L369 275L363 281L353 286L348 298L351 310L343 320L339 330L326 334L306 331L299 340L293 350L278 345L271 349L256 350L240 345L231 342L216 351L209 346L199 345L188 350L186 358L171 363L163 369L151 365L146 371L133 378L124 383L111 380L103 395L88 401L68 400L56 395L36 397L18 389L11 378L0 376" />
              <path d="M256 350L263 360L264 370L276 378L278 386L286 390L293 400L304 399V406M124 383L129 393L131 406L138 416" />
            </g>
            <g fill="none" stroke="#f7ab90" stroke-width="1" stroke-linejoin="round" filter="url(#rough)">
              <path d="M152 131L156 140V155L169 166L170 180L163 186L148 188L133 183L129 175M163 180L176 183L193 196L210 208L240 209M147 126L156 136" />
              <path d="M433 23L449 25L466 33L470 43L453 48L430 43L433 23M408 226L416 193L428 180L426 168L443 160L466 140M466 100L476 82" />
              <path d="M196 238L220 236L230 243L250 251L266 260L293 261L310 273L330 278M408 231L433 226L463 231L480 238M408 231L393 243L383 261L371 281L369 300L360 330L353 343M408 231L423 246L433 266L450 286L460 310L464 336L475 345" />
              <path d="M22 318L34 315L38 320M124 320L138 323M346 405L370 400M10 148L0 152M440 100L465 86L480 84M240 208L250 204L266 211" />
            </g>
            <g fill="none" stroke="#e5708f" stroke-width="1.300" stroke-linejoin="round" filter="url(#rough)">
              <path d="M0 60L41 58L56 61L68 56L84 56L104 50L116 36L119 25L128 21L149 24L153 0M163 23L173 26L182 28M189 36L198 49M36 0L38 12" />
              <path d="M0 139L19 151L33 145L56 146L73 151L88 160L109 168L129 175L139 175M145 165L156 163L183 152L203 146L223 138L246 141L263 139L286 130L301 125L309 117L329 120L346 129L361 140L373 156L374 173L369 193L379 205L403 210L419 211M309 117V100M346 129L358 118M343 0L344 30L338 50" />
              <path d="M110 203L100 211L83 226L63 240L58 246L39 260L16 266L9 275L0 276M93 212L106 205L119 195L131 178M154 179L158 190L173 203L183 218L197 238V251L209 270L216 281L218 291L226 306L236 330L254 329L274 332L286 338L326 341L343 345L351 348L348 363L349 383L361 393L386 396L409 395L429 390L443 385L459 378L480 376" />
              <path d="M124 203L125 213L131 233V246L128 273L124 283L121 300L114 313L118 326L114 341L104 355L101 371V391L106 410L101 420M131 246L139 250M69 366L83 366L96 371H102M236 330V340L226 350L214 353L209 366L204 380L205 420M374 206L396 208L406 216L403 202M465 206L478 212M400 395L402 404" />
            </g>
            <g class="cities">
              {#each cities as [x, y, name, dotX, dotY]}
                <circle cx={dotX} cy={dotY} r="1.700" />
                <text {x} {y}>{name}</text>
              {/each}
            </g>
            <g class="regions">{#each regions as [x, y, name]}<text {x} {y}>{name}</text>{/each}</g>
            <g class="countries"><text x="198" y="15">Slovensko</text><text x="153" y="220">Magyarország</text></g>
            <g class="large"><text x="144" y="163">Budapest</text><text x="343" y="396">Timișoara</text></g>
            <circle cx="144" cy="170" r="3.500" fill="#fff" stroke="#444" /><circle cx="144" cy="170" r="1.300" fill="#333" />
            <circle cx="343" cy="401" r="2.500" fill="#fff" stroke="#555" />
          </svg>

          <div class="marker budapest">{@render brokenImage()}<span>Marker</span></div>
          <div class="marker debrecen">{@render brokenImage()}<span>Marker</span></div>

          <div class="zoom">
            <button aria-label="Zoom in"><svg viewBox="0 0 14 14" width="14" height="14"><path d="M7 1V13M1 7H13" /></svg></button>
            <button aria-label="Zoom out"><svg viewBox="0 0 14 14" width="14" height="14"><path d="M1 7H13" /></svg></button>
          </div>

          <div class="popup">
            <b>Debrecen Office</b>
            <span>Debrecen, Kossuth tér 2.</span>
            <button aria-label="Close popup">×</button>
          </div>

          <p class="credit">
            <svg viewBox="0 0 12 8" width="12" height="8" aria-hidden="true"><path fill="#4c7be1" d="M0 0H12V4H0Z" /><path fill="#ffd500" d="M0 4H12V8H0Z" /></svg>
            <a href="#leaflet">Leaflet</a> | © <a href="#osm">OpenStreetMap</a> közreműködők
          </p>
        </section>

        <section class="office">
          <h2>Debrecen Office</h2>
          <p class="address">Debrecen, Kossuth tér 2.</p>
          <p class="about">Regionális iroda, tesztelés és design.</p>
          <h3>Dolgozók:</h3>
          <ul>
            {#each employees as person}
              <li>
                <div class="avatar">{@render brokenImage()}<span>{person.name}</span></div>
                <div class="who"><strong>{person.name}</strong><span>{person.role}</span></div>
              </li>
            {/each}
          </ul>
        </section>
      </main>
      <button class="next" aria-label="Developer tools">
        <svg viewBox="0 0 14 14" width="14" height="14">
          <defs><linearGradient id="fade" x1="0" y1="0" x2="0" y2="1"><stop offset=".2" stop-color="#fff" /><stop offset="1" stop-color="#fff" stop-opacity=".1" /></linearGradient></defs>
          <path d="M2 12.500V2L12 14" fill="none" stroke="#fff" stroke-width="1.600" /><path d="M10.700 1.500H12.200V9.500H10.700Z" fill="url(#fade)" />
        </svg>
      </button>
    </div>
    <div class="bar vertical"><i></i><b></b><i class="end"></i></div>
    <div class="bar horizontal"><i></i><b></b><i class="end"></i></div>
  </div>

  <footer class="taskbar">
    <div class="apps-row">
      {#each tasks as task}
        <button class:running={task.run} aria-label={task.name}><svg viewBox="0 0 24 24" width="24" height="24">{@html task.art}</svg></button>
      {/each}
    </div>
    <div class="open-row">
      <button class="chrome" aria-label="Chrome">
        <svg viewBox="0 0 24 24" width="24" height="24">
          <circle cx="12" cy="12" r="12" fill="#fbc116" />
          <path d="M1.600 6A12 12 0 0 1 22.400 6H12L6.800 15Z" fill="#e33b2e" />
          <path d="M1.600 6A12 12 0 0 0 12 24L17.200 15H6.800Z" fill="#229a49" />
          <circle cx="12" cy="12" r="6" fill="#fff" /><circle cx="12" cy="12" r="4.700" fill="#3b7ded" />
        </svg>
      </button>
      <button aria-label="More windows"><svg viewBox="0 0 24 24" width="24" height="24" fill="#fff"><circle cx="6" cy="12" r="1.700" /><circle cx="12" cy="12" r="1.700" /><circle cx="18" cy="12" r="1.700" /></svg></button>
    </div>
    <div class="clock"><span>12:32</span><span>13/06/2025</span></div>
  </footer>
</div>

<style>
  :global(body) { margin: 0; }
  .desktop {
    display: flex;
    flex-direction: column;
    height: 100vh;
    overflow: hidden;
    font-family: "Noto Sans", "Open Sans", sans-serif;
    font-size: 11px;
    background: #2d1a24;
  }
  button { margin: 0; padding: 0; border: 0; background: none; font: inherit; color: inherit; display: flex; align-items: center; justify-content: center; }
  a { color: inherit; text-decoration: none; }
  svg { display: block; flex: none; }

  .tabstrip { display: flex; height: 35px; flex: none; color: #dfc3d2; background: #2d1a24; }
  .tabstrip svg { fill: none; stroke: currentColor; }
  .search-tabs { width: 28px; height: 28px; margin: 1px 6px 0 5px; border-radius: 10px; background: #4d3542; flex: none; }
  .search-tabs svg { stroke: #f3dfe9; stroke-width: 2; }
  .tabs { display: flex; flex: 1; min-width: 0; }
  .tab { position: relative; display: flex; align-items: center; flex: 0 1 221px; min-width: 0; box-sizing: border-box; padding: 0 13px 4px 8px; gap: 8px; }
  .tab > svg { stroke: none; }
  .tab:nth-child(n + 3)::after { content: ""; position: absolute; right: 1px; top: 8px; width: 2px; height: 15px; background: #4d3542; }
  .tab.active { color: #f6e4ee; }
  .tab.active::before { content: ""; position: absolute; inset: 1px 4px 0 1px; border-radius: 10px 10px 0 0; background: #4d3542; z-index: 0; }
  .tab.active > * { position: relative; }
  .title { flex: 1; min-width: 0; display: block; text-align: left; white-space: nowrap; overflow: hidden; mask-image: linear-gradient(90deg, #000 85%, transparent); }
  .tab.active .title { mask-image: none; }
  .close svg { stroke-width: 1.5; }
  .new-tab { width: 32px; height: 31px; }
  .new-tab svg { stroke-width: 2; }
  .window-buttons { display: flex; flex: none; color: #fff; }
  .window-buttons button { width: 46px; height: 31px; }

  .toolbar { display: flex; align-items: center; height: 46px; flex: none; padding: 0 5px 0 3px; background: #4d3542; color: #e6cdd9; border-radius: 8px 8px 0 0; }
  .toolbar svg { fill: none; stroke: currentColor; stroke-width: 1.7; }
  .toolbar .art svg { stroke: none; stroke-width: 1; }
  .tool { position: relative; width: 36px; height: 34px; flex: none; }
  .dim { color: #8d7582; }
  .badge { position: absolute; right: 4px; bottom: 2px; width: 14px; height: 14px; border-radius: 3px; background: #42680d; color: #fff; font-size: 11px; line-height: 14px; font-weight: bold; }
  .omnibox { display: flex; align-items: center; flex: 1; min-width: 0; height: 34px; margin: 0 8px; padding: 0 5px; box-sizing: border-box; border-radius: 17px; background: #35202b; }
  .site-info { width: 24px; height: 24px; border-radius: 12px; background: #4d3542; flex: none; }
  .site-info svg { stroke-width: 1.5; }
  .omnibox input { flex: 1; min-width: 0; margin: 0; padding: 0 8px; border: 0; outline: 0; background: none; color: #f3dfe9; font: inherit; font-size: 13px; }
  .star { width: 36px; height: 24px; }
  .star svg { stroke-width: 1.3; }
  .extensions { display: flex; flex: none; }
  .divider { width: 2px; height: 16px; margin: 0 8px; flex: none; background: #6a505f; }
  .update { height: 34px; width: 111px; margin-left: 4px; gap: 10px; border-radius: 17px; background: #6f2d57; color: #fbe5f2; flex: none; white-space: nowrap; }
  .update svg { fill: currentColor; stroke: none; }

  .bookmarks { display: flex; align-items: center; height: 35px; flex: none; box-sizing: border-box; padding: 0 13px 7px 17px; background: #4d3542; color: #e6cdd9; border-bottom: 1px solid #5f5052; }
  .bookmarks a { display: flex; align-items: center; gap: 6px; white-space: nowrap; flex: none; }
  .marks { display: flex; gap: 20px; flex: 1; min-width: 0; overflow: hidden; margin-left: 6px; }
  .bookmarks .divider { margin: 0 8px 0 14px; }
  .apps svg, .folder { fill: none; stroke: currentColor; stroke-width: 1.7; }
  .bookmarks .divider + a { margin-left: 8px; gap: 8px; }

  .viewport { display: grid; grid-template: minmax(0, 1fr) 15px / minmax(0, 1fr) 14px; flex: 1; min-height: 0; background: #2c2c2c; }
  .page { position: relative; overflow: hidden; padding: 8px 0 0 7px; background: #fff; font-family: "Liberation Serif", serif; font-size: 16px; }
  .site-nav { display: flex; align-items: center; gap: 55px; height: 56px; padding: 0 32px; background: #1976d2; color: #fff; }
  .site-nav strong { font-size: 19px; letter-spacing: 1px; }
  .links { display: flex; gap: 56px; font-family: "Liberation Sans", sans-serif; }
  main { display: grid; grid-template-columns: 480px 380px; justify-content: center; align-items: start; gap: 32px; margin-right: 8px; padding: 32px 0 48px; background: #f4f8fc; }

  .map { position: relative; height: 420px; overflow: hidden; border-radius: 16px; box-shadow: 0 4px 24px rgba(25, 118, 210, .1); font-family: "Liberation Sans", sans-serif; font-size: 12px; }
  .tiles { width: 100%; height: 100%; }
  .tiles text { text-anchor: middle; paint-order: stroke; stroke: rgba(255, 255, 255, .75); stroke-width: 2px; stroke-linejoin: round; font-family: "Noto Sans", sans-serif; }
  .cities { font-size: 10px; fill: #2e2e2e; }
  .cities circle { fill: #fff; stroke: #555; stroke-width: 1; }
  .regions { font-size: 11px; font-style: italic; fill: #7d5b8b; }
  .countries { font-size: 14px; fill: #6d4a78; }
  .large { font-size: 12px; fill: #2e2e2e; }
  .marker { position: absolute; color: #000; line-height: 18px; }
  .marker span { display: block; }
  .budapest { left: 125px; top: 132px; }
  .debrecen { left: 361px; top: 127px; }
  .zoom { position: absolute; left: 10px; top: 10px; border: 2px solid rgba(0, 0, 0, .2); border-radius: 4px; background-clip: padding-box; overflow: hidden; }
  .zoom button { width: 30px; height: 30px; background: #fff; }
  .zoom button + button { height: 31px; border-top: 1px solid #ccc; }
  .zoom svg { stroke: #000; stroke-width: 2; }
  .popup { position: absolute; left: 284px; top: 52px; width: 191px; height: 62px; box-sizing: border-box; padding: 13px 0 0 21px; border-radius: 12px; background: #fff; color: #333; font-size: 13px; line-height: 17px; box-shadow: 0 3px 14px rgba(0, 0, 0, .4); }
  .popup b, .popup span { display: block; white-space: nowrap; }
  .popup::after { content: ""; position: absolute; left: 82px; top: 61px; border: 14px solid transparent; border-top: 13px solid #fff; border-bottom: 0; }
  .popup button { position: absolute; right: 0; top: 0; width: 24px; height: 24px; color: #757575; font-size: 18px; }
  .credit { position: absolute; right: 0; bottom: 0; margin: 0; padding: 0 5px; background: rgba(255, 255, 255, .8); color: #333; line-height: 17px; white-space: nowrap; }
  .credit svg { display: inline; }
  .credit a { color: #0078a8; }

  .office { min-height: 484px; box-sizing: border-box; padding: 51px 20px 20px; border-radius: 16px; background: #fff; box-shadow: 0 4px 24px rgba(25, 118, 210, .1); }
  h2 { margin: 0 0 20px; font-size: 24px; line-height: 28px; color: #000; }
  .office p { margin: 0 0 8px; line-height: 18px; }
  .address { color: #1976d2; }
  .about { color: #1a237e; }
  h3 { margin: 19px 0 18px; font-size: 19px; line-height: 22px; color: #000; }
  ul { display: grid; gap: 12px; margin: 0; padding: 0; list-style: none; }
  li { display: flex; gap: 16px; padding: 12px 14px 11px; border-radius: 10px; background: #e3f2fd; box-shadow: 0 2px 8px rgba(25, 118, 210, .08); }
  .avatar { width: 38px; height: 38px; flex: none; border: 2px solid #1976d2; border-radius: 50%; overflow: hidden; color: #000; line-height: 18px; }
  .avatar span { display: block; }
  .who { padding-top: 3px; }
  .who strong, .who span { display: block; line-height: 18px; }
  .who strong { color: #1976d2; }
  .who span { color: #5c9fe0; font-size: 15px; }
  .next { position: absolute; left: 18px; bottom: 19px; width: 38px; height: 38px; border: 1px solid #171717; border-radius: 50%; background: #2f3230; box-shadow: inset 0 0 0 1px #575757, 0 16px 32px -8px rgba(0, 0, 0, .2); }

  .bar { display: flex; align-items: center; background: #2c2c2c; }
  .bar b { border-radius: 5px; background: #9f9f9f; }
  .bar i { width: 0; height: 0; border: 4px solid transparent; }
  .vertical { flex-direction: column; padding: 4px 0; }
  .vertical i { border-bottom: 7px solid #9f9f9f; border-top: 0; margin-top: 1px; }
  .vertical .end { border-top: 7px solid #9f9f9f; border-bottom: 0; margin: auto 0 0; }
  .vertical b { width: 9px; height: 89%; margin-top: 7px; }
  .horizontal { padding: 0 4px; }
  .horizontal i { border-right: 7px solid #9f9f9f; border-left: 0; }
  .horizontal .end { border-left: 7px solid #9f9f9f; border-right: 0; margin-left: auto; }
  .horizontal b { height: 9px; width: 92%; margin-left: 6px; }

  .taskbar { display: flex; height: 47px; flex: none; box-sizing: border-box; padding-left: 15px; border-top: 1px solid #454142; background: linear-gradient(90deg, #232123 0, #271d26 10%, #32182a 17%, #301a20 24%, #2a2025 36%, #301b1e 48%, #42161a 60%, #361c22 68%, #44171b 79%, #2e1f2c 85%, #331a21 91%, #221f20 100%); color: #fff; }
  .apps-row { display: flex; flex: 0 1 auto; min-width: 0; overflow: hidden; }
  .apps-row button { position: relative; width: 44px; flex: none; }
  .running::after, .chrome::after { content: ""; position: absolute; bottom: 4px; left: 19px; width: 6px; height: 3px; border-radius: 2px; background: #a39fa2; }
  .open-row { display: flex; align-items: center; gap: 3px; margin-left: 2px; padding: 0 3px 0 4px; border-left: 1px solid #a09a9c; border-right: 1px solid #a09a9c; flex: none; }
  .open-row button { position: relative; width: 42px; height: 40px; border-radius: 4px; }
  .open-row .chrome { width: 40px; background: #4b2a32; }
  .chrome::after { left: 12px; bottom: 0; width: 16px; background: #f08a72; }
  .clock { display: flex; flex-direction: column; align-items: flex-end; justify-content: center; flex: 1; padding-right: 22px; font-size: 11px; line-height: 16px; }
</style>
